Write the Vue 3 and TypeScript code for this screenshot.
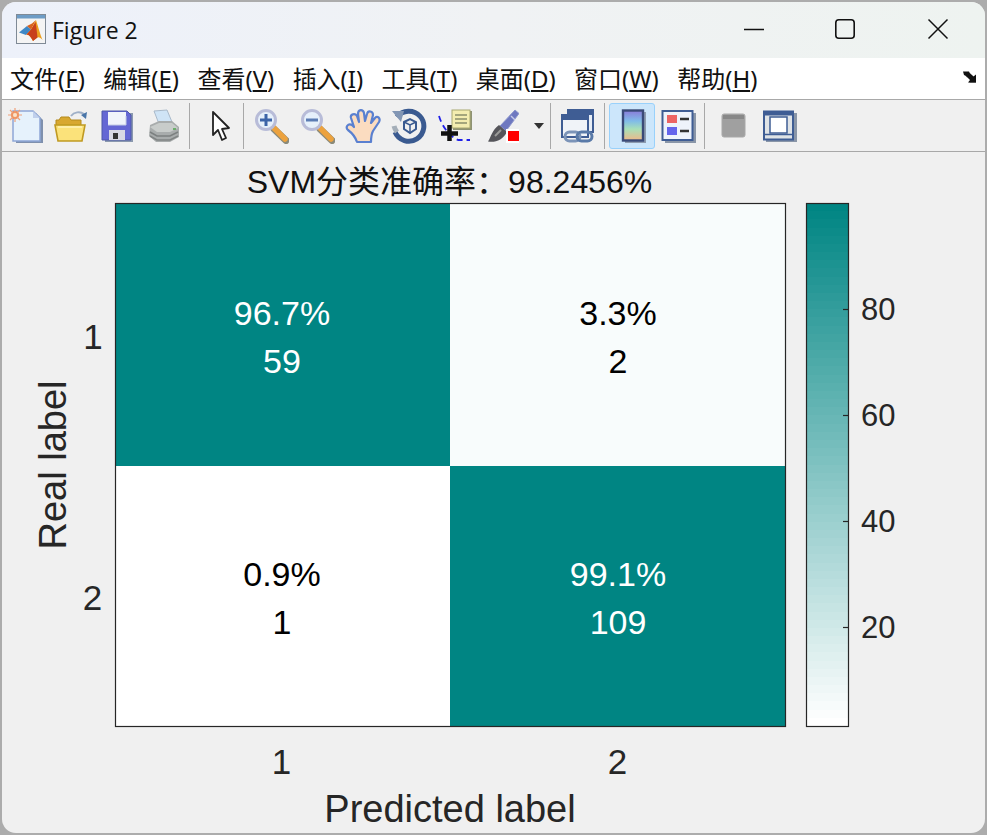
<script setup lang="ts">
const menus = [
  { label: '文件', key: 'F' },
  { label: '编辑', key: 'E' },
  { label: '查看', key: 'V' },
  { label: '插入', key: 'I' },
  { label: '工具', key: 'T' },
  { label: '桌面', key: 'D' },
  { label: '窗口', key: 'W' },
  { label: '帮助', key: 'H' },
];

const cells = [
  { x: 115, y: 203, w: 335, h: 263, fill: '#008583', color: '#fff', pct: '96.7%', n: '59', tx: 282, ty: 325 },
  { x: 450, y: 203, w: 335, h: 263, fill: '#f8fcfc', color: '#000', pct: '3.3%', n: '2', tx: 618, ty: 325 },
  { x: 115, y: 466, w: 335, h: 260, fill: '#ffffff', color: '#000', pct: '0.9%', n: '1', tx: 282, ty: 586 },
  { x: 450, y: 466, w: 335, h: 260, fill: '#008583', color: '#fff', pct: '99.1%', n: '109', tx: 618, ty: 586 },
];

// colormap runs white -> teal in 64 steps, top of the bar is the darkest
const bandCount = 64;
const bandEdge = (i: number) => Math.round(203 + (i * 523) / bandCount);
const bands = Array.from({ length: bandCount }, (_, i) => {
  const t = 1 - i / (bandCount - 1);
  const r = Math.round(255 * (1 - t));
  const g = Math.round(255 - (255 - 133) * t);
  const b = Math.round(255 - (255 - 131) * t);
  return { y: bandEdge(i), h: bandEdge(i + 1) - bandEdge(i), fill: `rgb(${r},${g},${b})` };
});

const colorTicks = [
  { y: 309, label: '80' },
  { y: 415, label: '60' },
  { y: 521, label: '40' },
  { y: 627, label: '20' },
];
</script>

<template>
  <div class="desktop">
    <div class="window">
      <header class="titlebar">
        <svg class="app-icon" width="30" height="30" viewBox="0 0 30 30">
          <rect x="0.5" y="0.5" width="29" height="29" fill="#f4f4f4" stroke="#7f8a96" />
          <rect x="1" y="1" width="28" height="3.5" fill="#6d9cc6" />
          <path d="M3 18.5L11 12L15 15.5L10 21Z" fill="#3f88c5" />
          <path d="M11 12L16 9.5L20 6L15 15.5Z" fill="#d9631e" />
          <path d="M20 6C22 12 24 20 26.5 26C24 23 22 22.5 20 24.5L17 27C15 24 13 20 10 21L15 15.5Z" fill="#ecA020" />
          <path d="M19.5 8C20.5 13 21 19 21.5 23.5L17 27C15.5 24 13.5 20.5 10.5 20.5L15 15.5Z" fill="#c8401c" />
        </svg>
        <span class="title-text">Figure 2</span>
        <div class="win-controls">
          <button class="win-btn" aria-label="minimize">
            <svg width="22" height="22" viewBox="0 0 22 22"><path d="M1 11.5H21" stroke="#111" stroke-width="1.6" /></svg>
          </button>
          <button class="win-btn mid" aria-label="maximize">
            <svg width="22" height="22" viewBox="0 0 22 22"><rect x="1.8" y="1.8" width="18.4" height="18.4" rx="3" fill="none" stroke="#111" stroke-width="1.6" /></svg>
          </button>
          <button class="win-btn" aria-label="close">
            <svg width="22" height="22" viewBox="0 0 22 22"><path d="M1.5 1.5L20.5 20.5M20.5 1.5L1.5 20.5" stroke="#111" stroke-width="1.5" /></svg>
          </button>
        </div>
      </header>

      <nav class="menubar">
        <span v-for="m in menus" :key="m.key" class="menu-item">{{ m.label }}(<u>{{ m.key }}</u>)</span>
        <svg class="dock" width="16" height="14" viewBox="0 0 16 14">
          <path d="M3 3H8L10 5L12 7L14 5.5V13H7L9 10.5L6 7.5L4 7Z" fill="#9a9a9a" />
          <path d="M1 1.5H7L8 3.5L11.5 6.5L14 4.5V12.5H6L8 10L4 6L2 5Z" fill="#111" />
        </svg>
      </nav>

      <div class="toolbar">
        <button class="tool">
          <svg viewBox="0 0 36 36">
            <path d="M9 5H29L36 12V35H9Z" fill="#7f90ad" />
            <path d="M6 3H26L33 10V33H6Z" fill="#e6f2fc" stroke="#8ea6d6" stroke-width="1.5" />
            <path d="M26 3V10H33Z" fill="#c0d0ec" />
            <circle cx="8" cy="7" r="4" fill="#f08a50" />
            <path d="M8 0V14M1 7H15M3 2L13 12M13 2L3 12" stroke="#f0a078" stroke-width="1.2" />
            <circle cx="8" cy="7" r="2" fill="#fbe3c8" />
          </svg>
        </button>
        <button class="tool">
          <svg viewBox="0 0 36 36">
            <path d="M18 8C21 4 27 3 31 6" fill="none" stroke="#9fb0c8" stroke-width="2" />
            <path d="M34 4L33 11L28 7Z" fill="#4a76a8" />
            <path d="M3 12H6L8 9H16L18 12H28V19H3Z" fill="#d8a830" stroke="#b48a1c" />
            <path d="M2 17H32L29 33H5Z" fill="#fbe27a" stroke="#c09a22" stroke-width="1.6" />
            <path d="M5 19H29" stroke="#fff3b8" stroke-width="1.5" />
          </svg>
        </button>
        <button class="tool">
          <svg viewBox="0 0 36 36">
            <path d="M6 5H34V34H6Z" fill="#8a98ae" />
            <path d="M3 3H28L32 7V32H3Z" fill="#6467d4" stroke="#4d58a8" />
            <rect x="9" y="4" width="18" height="13" fill="#f0f4fb" />
            <path d="M9 17H27V8" fill="none" stroke="#c4cde4" />
            <rect x="10" y="22" width="16" height="10" fill="#d8d8e4" />
            <rect x="14" y="25" width="5" height="6" fill="#333" />
          </svg>
        </button>
        <button class="tool">
          <svg viewBox="0 0 36 36">
            <path d="M9 3L22 2L27 14L14 16Z" fill="#cfe4f6" stroke="#a8b8c8" />
            <path d="M5 17L14 13H27L34 19V29L25 34H11L4 28Z" fill="#a8acac" />
            <path d="M5 19L14 15H27L33 20L25 24H12Z" fill="#c8ccca" />
            <path d="M5 24L12 28H25L33 24" fill="none" stroke="#7c8080" stroke-width="1.5" />
            <path d="M5 28L12 32H25L33 28" fill="none" stroke="#808484" stroke-width="1.5" />
            <rect x="28" y="20" width="3" height="2" fill="#6cae6c" />
          </svg>
        </button>
        <i class="sep sep-file"></i>
        <button class="tool">
          <svg viewBox="0 0 36 36">
            <path d="M11 4V27L16 22L20 32L24 30L20 21L27 20Z" fill="#fff" stroke="#222" stroke-width="1.8" stroke-linejoin="round" />
          </svg>
        </button>
        <i class="sep sep-pointer"></i>
        <button class="tool">
          <svg viewBox="0 0 36 36">
            <path d="M21 21L33 32.5" stroke="#8a8a7a" stroke-width="7" stroke-linecap="round" />
            <path d="M21 20L32 31" stroke="#eca23e" stroke-width="5.5" stroke-linecap="round" />
            <circle cx="13" cy="12" r="9.5" fill="#e6f0fb" stroke="#b8bcd8" stroke-width="3" />
            <path d="M7 12H19M13 6V18" stroke="#3c64a8" stroke-width="3" />
          </svg>
        </button>
        <button class="tool">
          <svg viewBox="0 0 36 36">
            <path d="M21 21L33 32.5" stroke="#8a8a7a" stroke-width="7" stroke-linecap="round" />
            <path d="M21 20L32 31" stroke="#eca23e" stroke-width="5.5" stroke-linecap="round" />
            <circle cx="13" cy="12" r="9.5" fill="#e6f0fb" stroke="#b8bcd8" stroke-width="3" />
            <path d="M7 12H19" stroke="#5b7cb4" stroke-width="3" />
          </svg>
        </button>
        <button class="tool">
          <svg viewBox="0 0 36 36">
            <path d="M12 34C10 28 7 25 3 22C0 19 3 15 7 17L9 19L6 10C5 6 10 5 12 8L14 14L13 6C13 1 18 1 19 5L20 13L22 6C23 2 28 3 28 7L26 15L30 10C32 7 36 10 34 14L28 23C26 27 26 30 26 34Z" fill="#fbdcc0" stroke="#5a80d0" stroke-width="2.2" stroke-linejoin="round" />
          </svg>
        </button>
        <button class="tool">
          <svg viewBox="0 0 36 36">
            <path d="M6 9A15 15 0 1 1 4 24" fill="none" stroke="#3a5a90" stroke-width="5" />
            <path d="M6 24A15 15 0 0 1 3 18" fill="none" stroke="#a4aeb8" stroke-width="5" />
            <path d="M1 3H13L10 14Z" fill="#8296b4" />
            <path d="M13 14L19 11L25 14V21L19 25L13 21Z" fill="none" stroke="#3a5a90" stroke-width="2" />
            <path d="M13 14L19 17L25 14M19 17V25" fill="none" stroke="#3a5a90" stroke-width="1.5" />
          </svg>
        </button>
        <button class="tool">
          <svg viewBox="0 0 36 36">
            <rect x="16" y="3" width="19" height="19" fill="#8e9274" />
            <rect x="15" y="2" width="18" height="18" fill="#f3edb0" stroke="#a8a870" />
            <path d="M18 7H30M18 11H30M18 15H30" stroke="#a4a67c" stroke-width="1.8" />
            <path d="M2 8C5 18 12 28 21 32H33" fill="none" stroke="#2020e8" stroke-width="1.8" stroke-dasharray="6 4" />
            <path d="M12.5 17V33M4 25.5H21" stroke="#111" stroke-width="4.5" />
          </svg>
        </button>
        <button class="tool">
          <svg viewBox="0 0 36 36">
            <path d="M17 18L32 2L36 5.5L23 23Z" fill="#6e78c0" stroke="#8c96cc" />
            <path d="M28 8L32 12" stroke="#c8cce8" stroke-width="1.5" />
            <path d="M16 17L24 24C20 32 12 35 5 33.5C8 29 9 22 16 17Z" fill="#55555a" />
            <path d="M12 28L18 22" stroke="#9a9a98" stroke-width="2" />
            <rect x="23" y="21" width="13" height="14" fill="#fff" />
            <rect x="25" y="23" width="11" height="10" fill="#f00" />
          </svg>
        </button>
        <span class="caret"></span>
        <i class="sep sep-brush"></i>
        <button class="tool">
          <svg viewBox="0 0 36 36">
            <rect x="9" y="2" width="25" height="22" fill="#e8eef6" stroke="#3f5d94" stroke-width="2" />
            <rect x="9" y="2" width="25" height="5" fill="#3f5d94" />
            <rect x="3" y="7" width="26" height="22" fill="#f0f3f8" stroke="#3f5d94" stroke-width="2" />
            <rect x="3" y="7" width="26" height="5" fill="#3f5d94" />
            <rect x="6" y="24" width="15" height="9" rx="4.5" fill="none" stroke="#7c94b8" stroke-width="3" />
            <rect x="18" y="24" width="15" height="9" rx="4.5" fill="none" stroke="#5a7aa8" stroke-width="3" />
          </svg>
        </button>
        <i class="sep sep-link"></i>
        <button class="tool active">
          <svg viewBox="0 0 36 36">
            <defs>
              <linearGradient id="cbar" x1="0" y1="0" x2="0" y2="1">
                <stop offset="0" stop-color="#8a7ad8" />
                <stop offset="0.35" stop-color="#80bce8" />
                <stop offset="0.62" stop-color="#a8e0b8" />
                <stop offset="1" stop-color="#f0b888" />
              </linearGradient>
            </defs>
            <rect x="11" y="4" width="21" height="31" fill="#8d9cb0" />
            <rect x="9" y="2.5" width="20" height="30" fill="url(#cbar)" stroke="#3a4a78" stroke-width="2.4" />
          </svg>
        </button>
        <button class="tool">
          <svg viewBox="0 0 36 36">
            <rect x="5" y="5" width="31" height="30" fill="#8a96a8" />
            <rect x="2.5" y="3" width="30" height="29" fill="#eef3fb" stroke="#3f5d94" stroke-width="2" />
            <rect x="7" y="7" width="10" height="8" fill="#ec6464" />
            <rect x="7" y="19" width="10" height="8" fill="#6464ec" />
            <path d="M20 11H29M20 23H29" stroke="#333" stroke-width="2.4" />
          </svg>
        </button>
        <i class="sep sep-legend"></i>
        <button class="tool">
          <svg viewBox="0 0 36 36">
            <rect x="7" y="6" width="23" height="23" rx="2" fill="#a0a0a0" stroke="#a8a8a8" />
            <rect x="8" y="7" width="21" height="4" fill="#888" />
          </svg>
        </button>
        <button class="tool">
          <svg viewBox="0 0 36 36">
            <rect x="5" y="5" width="31" height="29" fill="#8a96a8" />
            <rect x="3" y="3.5" width="29" height="28" fill="#dfe3e6" stroke="#3f5d94" stroke-width="2" />
            <rect x="3" y="3.5" width="29" height="4" fill="#3f5d94" />
            <path d="M4 26.5H31" stroke="#3f5d94" stroke-width="1.5" />
            <rect x="9" y="9" width="17" height="16" fill="#fff" stroke="#3f5d94" stroke-width="1.5" />
          </svg>
        </button>
      </div>

      <main class="figure">
        <svg class="plot" width="983" height="681" viewBox="2 152 983 681">
          <text class="title" x="449.5" y="193">SVM分类准确率：98.2456%</text>

          <g v-for="c in cells" :key="c.pct">
            <rect :x="c.x" :y="c.y" :width="c.w" :height="c.h" :fill="c.fill" />
            <text class="cell-text" :x="c.tx" :y="c.ty" :fill="c.color">{{ c.pct }}</text>
            <text class="cell-text" :x="c.tx" :y="c.ty + 48" :fill="c.color">{{ c.n }}</text>
          </g>
          <rect x="115.5" y="203.5" width="670" height="523" fill="none" stroke="#262626" stroke-width="1.2" />

          <text class="tick" x="93" y="349">1</text>
          <text class="tick" x="92.5" y="610">2</text>
          <text class="tick" x="281.5" y="774">1</text>
          <text class="tick" x="617.5" y="774">2</text>
          <text class="axis-label" x="450" y="822">Predicted label</text>
          <text class="axis-label" transform="translate(66 465) rotate(-90)">Real label</text>

          <rect v-for="b in bands" :key="b.y" x="806" :y="b.y" width="43" :height="b.h" :fill="b.fill" />
          <rect x="806.5" y="203.5" width="42" height="523" fill="none" stroke="#262626" stroke-width="1.2" />
          <g v-for="t in colorTicks" :key="t.label">
            <path :d="`M843 ${t.y + 0.5}H848`" stroke="#262626" stroke-width="1.2" />
            <text class="bar-tick" x="861" :y="t.y + 11">{{ t.label }}</text>
          </g>
        </svg>
      </main>
    </div>
  </div>
</template>

<style scoped>
.desktop {
  width: 987px;
  height: 835px;
  padding: 2px;
  box-sizing: border-box;
  background: #acacac;
}

.window {
  height: 100%;
  display: flex;
  flex-direction: column;
  border-radius: 14px;
  overflow: hidden;
  background: #f0f0f0;
}

.titlebar {
  height: 56px;
  flex: none;
  display: flex;
  align-items: center;
  padding-left: 14px;
  background: linear-gradient(90deg, #edf1fa, #f0f2f4 50%, #eef3f0);
}

.app-icon {
  margin-top: -2px;
}

.title-text {
  margin-left: 6px;
  font: 23px "Open Sans", "Noto Sans", sans-serif;
  color: #111;
}

.win-controls {
  margin-left: auto;
  padding-right: 1px;
  display: flex;
}

.win-btn {
  width: 92px;
  height: 56px;
  padding: 0 0 2px;
  border: 0;
  background: none;
  display: flex;
  align-items: center;
  justify-content: center;
}

.win-btn.mid {
  padding-right: 2px;
}

.menubar {
  height: 41px;
  flex: none;
  box-sizing: border-box;
  display: flex;
  align-items: center;
  gap: 18.4px;
  padding: 0 0 3px 8px;
  background: #fff;
  font: 24px "Noto Sans", "Noto Sans CJK SC", sans-serif;
  color: #111;
}

.menu-item {
  white-space: nowrap;
}

.dock {
  margin-left: auto;
  margin-right: 7px;
}

.toolbar {
  height: 53px;
  flex: none;
  box-sizing: border-box;
  display: flex;
  align-items: center;
  border-top: 1.5px solid #a8a8a8;
  border-bottom: 1.5px solid #a8a8a8;
  background: #f0f0f0;
}

.tool {
  width: 46px;
  height: 46px;
  flex: none;
  padding: 0;
  border: 1px solid transparent;
  border-radius: 3px;
  background: none;
  display: flex;
  align-items: center;
  justify-content: center;
}

.tool svg {
  width: 36px;
  height: 36px;
  filter: blur(0.35px);
}

.tool.active {
  background: #cce6fb;
  border-color: #99d1fb;
}

.caret {
  width: 0;
  height: 0;
  flex: none;
  margin-left: 10px;
  border: 5px solid transparent;
  border-top: 6px solid #333;
  border-bottom: 0;
}

.sep {
  width: 1px;
  height: 46px;
  flex: none;
  background: #a8a8a8;
}

.sep-file {
  margin: 0 7px 0 3px;
}

.sep-pointer {
  margin-right: 4px;
}

.sep-brush {
  margin: 0 3px 0 6px;
}

.sep-link {
  margin: 0 4px;
}

.sep-legend {
  margin: 0 5px 0 3px;
}

.figure {
  flex: 1;
  min-height: 0;
}

.plot {
  display: block;
}

.plot text {
  font-family: "Liberation Sans", "Noto Sans CJK SC", sans-serif;
  text-anchor: middle;
}

.title {
  font-size: 32px;
  fill: #111;
}

.cell-text {
  font-size: 34px;
}

.tick {
  font-size: 35px;
  fill: #262626;
}

.plot .bar-tick {
  font-size: 31px;
  fill: #262626;
  text-anchor: start;
}

.axis-label {
  font-size: 38px;
  fill: #262626;
}
</style>
